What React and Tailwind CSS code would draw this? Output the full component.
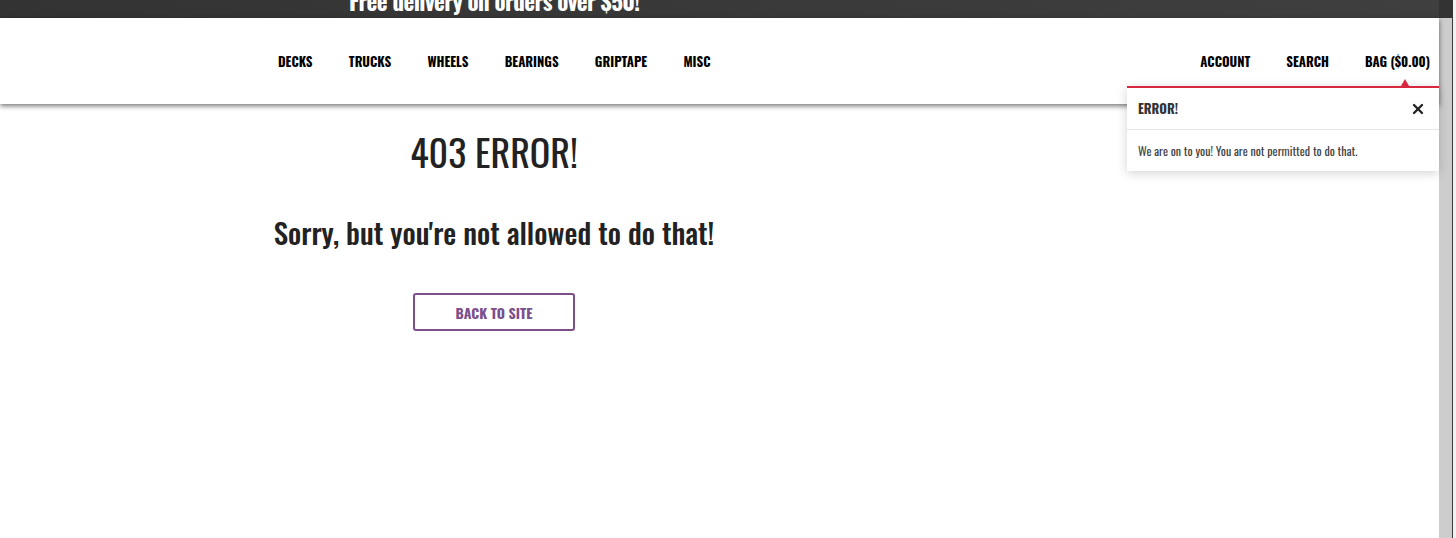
import { X } from "lucide-react";

const font = {
  fontFamily: '"Oswald", "Liberation Sans Narrow", "DejaVu Sans Condensed", "Liberation Sans", sans-serif',
};

const leftLinks = ["DECKS", "TRUCKS", "WHEELS", "BEARINGS", "GRIPTAPE", "MISC"];
const rightLinks = ["ACCOUNT", "SEARCH", "BAG ($0.00)"];

function Toast() {
  return (
    <div className="absolute right-0 top-[68px] w-[312px] bg-white border-t-2 border-[#d7263d] shadow-[0_2px_10px_rgba(0,0,0,0.18)]">
      <div className="absolute -top-[9px] right-[30px] w-0 h-0 border-l-[4px] border-r-[4px] border-b-[7px] border-l-transparent border-r-transparent border-b-[#d7263d]" />
      <div className="flex items-center justify-between h-[42px] px-[11px] border-b border-[#e6e6e6]">
        <span className="text-[13px] font-bold text-[#333]">ERROR!</span>
        <X size={16} strokeWidth={3.5} className="text-[#222] mr-[2px]" />
      </div>
      <div className="h-[41px] flex items-center px-[11px] text-[12px] text-[#444]">
        We are on to you! You are not permitted to do that.
      </div>
    </div>
  );
}

export default function App() {
  return (
    <div className="w-[1456px] h-[538px] flex bg-white overflow-hidden" style={font}>
      <div className="w-[1439px] flex flex-col relative">
        <div className="h-[18px] bg-gradient-to-r from-[#333333] to-[#3f3f3f] overflow-hidden">
          <div className="pl-[349px] -mt-[10px] text-[23px] leading-none font-bold text-white tracking-tight">
            Free delivery on orders over $50!
          </div>
        </div>
        <header className="h-[86px] bg-white shadow-[0_2px_5px_rgba(0,0,0,0.55)] relative z-10 flex items-center justify-between pl-[278px] pr-[9px] pt-[2px]">
          <nav className="flex gap-[36.3px] text-[13px] font-bold text-black">
            {leftLinks.map((l) => (
              <span key={l}>{l}</span>
            ))}
          </nav>
          <nav className="flex gap-[36px] text-[13px] font-bold text-black">
            {rightLinks.map((l) => (
              <span key={l}>{l}</span>
            ))}
          </nav>
          <Toast />
        </header>
        <main className="pl-[260px] w-[728px] flex flex-col items-center text-[#222]">
          <h1 className="mt-[21px] text-[38px] leading-[52px] font-[450]">403 ERROR!</h1>
          <h2 className="mt-[35px] text-[29px] leading-[40px] font-medium">
            Sorry, but you're not allowed to do that!
          </h2>
          <button className="mt-[41px] w-[162px] h-[38px] border-2 border-[#7a4f8c] rounded-[3px] text-[14px] font-bold text-[#7a4f8c]">
            BACK TO SITE
          </button>
        </main>
      </div>
      <div className="flex flex-col">
        <div className="h-[18px] w-[14px] bg-[#333]" />
        <div className="flex-1 flex">
          <div className="w-[13px] bg-[#cdcdcd]" />
          <div className="w-px bg-[#3a3a3a]" />
        </div>
      </div>
      <div className="flex-1 bg-[#f2f2f2]" />
    </div>
  );
}
